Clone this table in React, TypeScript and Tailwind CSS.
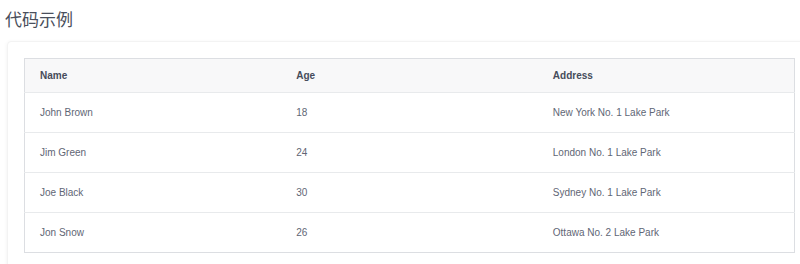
const rows = [
  { name: "John Brown", age: 18, address: "New York No. 1 Lake Park" },
  { name: "Jim Green", age: 24, address: "London No. 1 Lake Park" },
  { name: "Joe Black", age: 30, address: "Sydney No. 1 Lake Park" },
  { name: "Jon Snow", age: 26, address: "Ottawa No. 2 Lake Park" },
];

export default function App() {
  return (
    <div className="w-[800px] h-[264px] overflow-hidden bg-white font-['Liberation_Sans','Noto_Sans_CJK_SC',sans-serif]">
      <h2 className="pl-[5px] pt-[7px] h-[41px] text-[17px] leading-[24px] text-[#4a4f5c] font-['Noto_Sans_CJK_SC',sans-serif] font-normal">
        代码示例
      </h2>
      <div className="ml-[7px] w-[810px] rounded-[4px] border border-[#f3f3f3] shadow-[0_1px_4px_rgba(0,0,0,0.06)] bg-white p-4">
        <table className="w-[771px] table-fixed border-collapse border border-[#dcdee2] text-[10px] text-[#5f6675]">
          <thead>
            <tr className="h-[34px] bg-[#f8f8f9] border-b border-[#e8eaec]">
              <th className="text-left font-bold pl-[15px] text-[#464c5b]">Name</th>
              <th className="text-left font-bold pl-[15px] text-[#464c5b]">Age</th>
              <th className="text-left font-bold pl-[15px] text-[#464c5b]">Address</th>
            </tr>
          </thead>
          <tbody>
            {rows.map((r, i) => (
              <tr key={i} className={`h-[40px] ${i < rows.length - 1 ? "border-b border-[#e8eaec]" : ""}`}>
                <td className="pl-[15px]">{r.name}</td>
                <td className="pl-[15px]">{r.age}</td>
                <td className="pl-[15px]">{r.address}</td>
              </tr>
            ))}
          </tbody>
        </table>
      </div>
    </div>
  );
}
